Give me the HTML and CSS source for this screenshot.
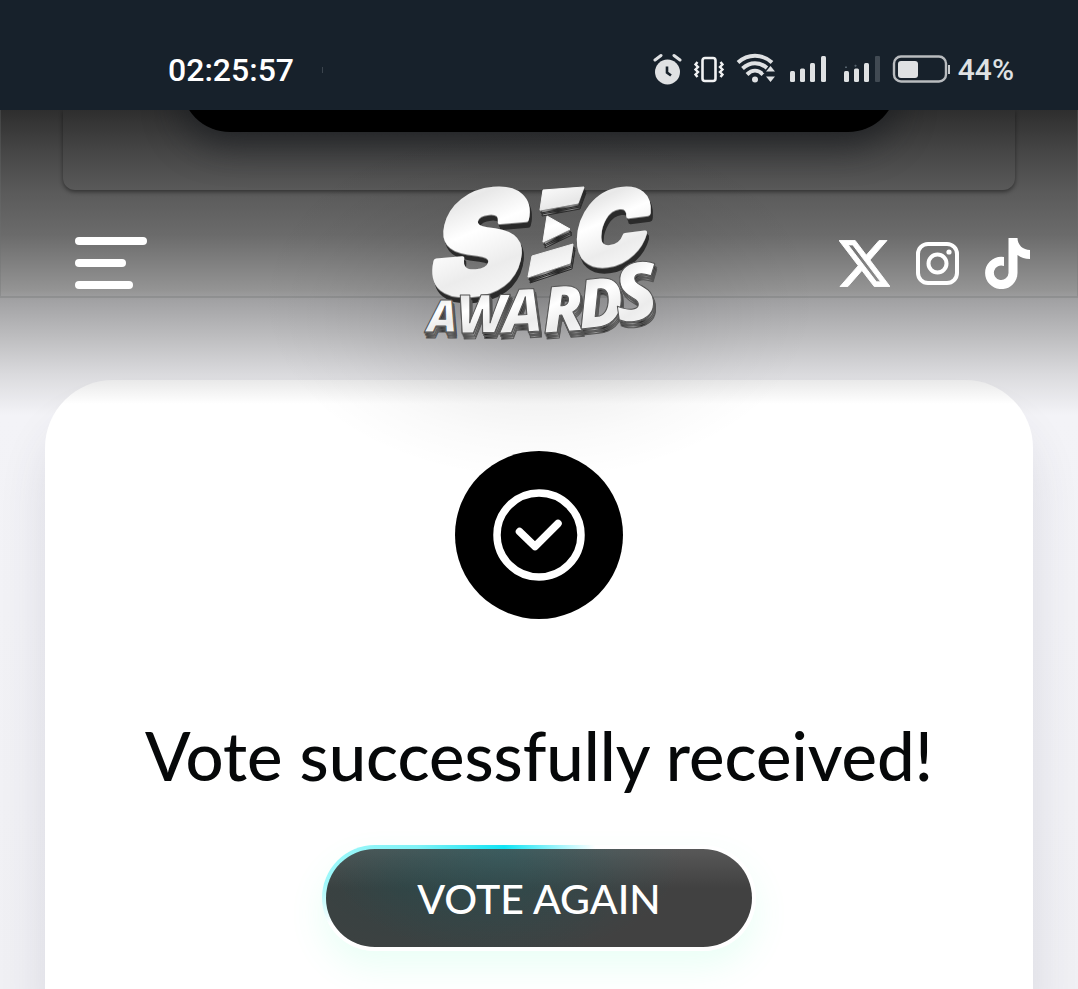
FILE: index.html
```html
<!DOCTYPE html>
<html lang="en">
<head>
<meta charset="utf-8">
<meta name="viewport" content="width=device-width, initial-scale=1">
<title>SEC Awards</title>
<link rel="stylesheet" href="styles.css">
</head>
<body>
<div class="status">
  <div class="status-left"><time>02:25:57</time><span class="tick"></span></div>
  <div class="status-right">
    <svg class="status-icons" width="297" height="34" viewBox="0 0 297 34" fill="#dfe1e3" aria-hidden="true">
      <circle cx="14.500" cy="19" r="12.500"/>
      <path d="M2 7L8 2.500M27 7L21 2.500" stroke="#dfe1e3" stroke-width="3" stroke-linecap="round"/>
      <path d="M14 13.500V19.500L18 22.500" fill="none" stroke="#17212b" stroke-width="2.600"/>
      <g fill="none" stroke="#f1f2f3">
        <rect x="49.500" y="5" width="13" height="23" rx="2.500" stroke-width="2.600"/>
        <path d="M44.500 9L42.500 11.500L45 14L42.500 16.500L45 19L42.500 21.500L44.500 24M67.500 9L69.500 11.500L67 14L69.500 16.500L67 19L69.500 21.500L67.500 24" stroke-width="2.400"/>
      </g>
      <g fill="none" stroke="#dfe1e3" stroke-width="4">
        <path d="M85 9.500C95 .500 109 .500 119 9.500"/>
        <path d="M89.500 15.500C97 8.500 107 8.500 114.500 15.500"/>
        <path d="M94 21.500C99 16.500 105 16.500 110 21.500"/>
      </g>
      <circle cx="102" cy="26.500" r="3"/>
      <path d="M113 18.500L117.500 13L122 18.500ZM113 23.500L117.500 29L122 23.500Z" stroke="#17212b" stroke-width="3" paint-order="stroke"/>
      <rect x="137" y="18" width="5" height="11" rx="1.500"/><rect x="147" y="15.500" width="5" height="13.500" rx="1.500"/><rect x="157" y="10" width="5" height="19" rx="1.500"/><rect x="168" y="3" width="5" height="26" rx="1.500"/>
      <rect x="191" y="18" width="5" height="11" rx="1.500"/><rect x="201" y="15.500" width="5" height="13.500" rx="1.500"/><rect x="211" y="10" width="5" height="19" rx="1.500"/><rect x="222" y="3" width="5" height="26" rx="1" fill="#414a53"/>
      <path d="M193 15V13.500M202 13.500L203 12" stroke="#53606b" stroke-width="2"/>
      <rect x="241" y="3.500" width="52" height="25" rx="7" fill="none" stroke="#b9bcbf" stroke-width="2.400"/>
      <rect x="245" y="8" width="20" height="17" rx="3"/>
      <path d="M296 12V21" stroke="#c7cacc" stroke-width="2"/>
    </svg>
    <span>44%</span>
  </div>
</div>
<div class="page">
  <div class="behind" aria-hidden="true"><div class="behind-card"><div class="behind-pill"></div></div></div>
  <header class="bar">
    <button class="menu" aria-label="Menu"><span class="line line-a"></span><span class="line line-b"></span><span class="line line-c"></span></button>
    <a class="logo" href="#" aria-label="SEC Awards">
      <svg width="232" height="156" viewBox="0 0 232 156">
        <defs>
          <linearGradient id="chrome" x1="0" y1="0" x2=".2" y2="1"><stop offset="0" stop-color="#fff"/><stop offset=".3" stop-color="#e8e8e8"/><stop offset=".5" stop-color="#fff"/><stop offset=".75" stop-color="#ececec"/><stop offset="1" stop-color="#fafafa"/></linearGradient>
          <linearGradient id="side"><stop offset="0" stop-color="#1c1c1c"/><stop offset=".3" stop-color="#a0a0a0"/><stop offset=".5" stop-color="#222"/><stop offset=".75" stop-color="#909090"/><stop offset="1" stop-color="#181818"/></linearGradient>
          <g id="word">
            <g class="big">
              <text class="s" transform="translate(6 112) rotate(-5) skewX(-9)">S</text>
              <text class="c" transform="translate(150 83) rotate(-7) skewX(-9)">C</text>
            </g>
            <path d="M119 5L160 2L154 18L116 25ZM123 31L146 44L119 57ZM108 71L149 59L146 78L104 92Z" stroke-width="1"/>
            <g class="small">
              <text class="w1" transform="translate(3 147)">A</text>
              <text class="w2" transform="translate(33 148) rotate(-1)">W</text>
              <text class="w3" transform="translate(79 148) rotate(-3)">A</text>
              <text class="w4" transform="translate(120 148) rotate(-4)">R</text>
              <text class="w5" transform="translate(156 144) rotate(-6)">D</text>
              <text class="w6" transform="translate(194 138) rotate(-8)">S</text>
            </g>
          </g>
        </defs>
        <g fill="url(#side)" stroke="#2b2b2b"><use href="#word" x="2" y="6"/><use href="#word" x="2" y="4"/><use href="#word" x="1" y="3"/></g>
        <use href="#word" y="1" fill="#888" stroke="#888"/>
        <use href="#word" fill="url(#chrome)" stroke="url(#chrome)"/>
      </svg>
    </a>
    <nav class="social" aria-label="Social">
      <a href="#" aria-label="X"><svg width="51" height="47" viewBox="1.254 2.250 21.573 19.500" fill="#fff" stroke="#fff" stroke-width=".4"><path d="M18.244 2.250h3.308l-7.227 8.260 8.502 11.240H16.170l-5.214-6.817L4.990 21.750H1.680l7.730-8.835L1.254 2.250H8.080l4.713 6.231zm-1.161 17.520h1.833L7.084 4.126H5.117z"/></svg></a>
      <a href="#" aria-label="Instagram"><svg width="43" height="43" viewBox="0 0 43 43" fill="none" stroke="#fff" stroke-width="4"><rect x="2" y="2" width="39" height="39" rx="10"/><circle cx="21.500" cy="21.500" r="9"/><circle cx="33" cy="10" r="2.600" fill="#fff" stroke="none"/></svg></a>
      <a href="#" aria-label="TikTok"><svg width="45" height="51" viewBox="0 0 45 51" fill="#fff"><path d="M23.500 0H32.500C32.500 7 38 12 45 12V21C40 21 36 19.500 32.500 17V35A16.200 16.200 0 1 1 16.300 18.700Q17.700 18.700 19 19V28A7.300 7.300 0 1 0 23.500 35Z"/></svg></a>
    </nav>
  </header>
  <main class="card">
    <svg class="badge" width="168" height="168" viewBox="0 0 168 168" fill="none" stroke="#fff" aria-hidden="true"><circle cx="84" cy="84" r="84" fill="#000" stroke="none"/><circle cx="84" cy="84" r="42" stroke-width="7.500"/><path d="M64.500 80.500L80 95.500L103 72.500" stroke-width="7.500" stroke-linecap="round" stroke-linejoin="round"/></svg>
    <h1>Vote successfully received!</h1>
    <button class="again">VOTE AGAIN</button>
  </main>
</div>
</body>
</html>
```
FILE: styles.css
```css
* { box-sizing: border-box; }
body {
  margin: 0;
  min-height: 100vh;
  display: flex;
  flex-direction: column;
  font-family: Lato, Roboto, sans-serif;
  background: #f2f2f6;
}
button { font: inherit; border: 0; padding: 0; cursor: pointer; }
.status {
  height: 110px;
  padding: 30px 64px 0 168px;
  display: flex;
  justify-content: space-between;
  align-items: center;
  background: #17212b;
  color: #fff;
  font: 500 32px/40px Roboto, sans-serif;
}
.status-left, .status-right { display: flex; align-items: center; }
.status-left { gap: 28px; }
.tick { width: 1px; height: 6px; background: #3b444d; }
.status-right { gap: 8px; color: #dfe1e3; font-size: 30px; }
.page {
  position: relative;
  flex: 1;
  display: flex;
  flex-direction: column;
  overflow: hidden;
  background: linear-gradient(#2e2e2e 0, #454545 40px, #5b5b5b 84px, #6b6b6b 125px, #949494 180px, #a1a1a3 190px, #bebec0 228px, #dadadd 264px, #f3f3f7 305px, #f0f0f4 100%);
}
.behind {
  position: absolute;
  inset: 0 0 auto;
  height: 188px;
  padding: 0 62px;
  border: 1px solid rgba(110, 112, 112, .3);
  border-width: 0 1px 2px;
}
.behind-card {
  height: 80px;
  overflow: hidden;
  border-radius: 0 0 12px 12px;
  box-shadow: 0 2px 4px rgba(0, 0, 0, .45);
}
.behind-pill {
  height: 98px;
  margin: -76px 118px 0;
  border-radius: 49px;
  background: #000;
  box-shadow: 0 12px 36px rgba(20, 23, 28, .65);
}
.bar {
  position: relative;
  z-index: 1;
  display: grid;
  grid-template-columns: 1fr auto 1fr;
  align-items: center;
  padding: 75px 48px 39px 75px;
}
.menu {
  display: flex;
  flex-direction: column;
  gap: 14px;
  justify-self: start;
  background: none;
}
.line { height: 8px; border-radius: 4px; background: #fff; }
.line-a { width: 72px; }
.line-b { width: 51px; }
.line-c { width: 58px; }
.logo, .social a, .logo svg, .social svg { display: block; }
.logo { margin-right: 26px; }
.logo svg { overflow: visible; font-family: "Open Sans", Lato, sans-serif; font-weight: 800; font-style: italic; }
.big { font-family: Inter, "Open Sans", sans-serif; font-weight: 900; stroke-width: 5px; stroke-linejoin: round; }
.small { stroke: #555; stroke-width: 1px; stroke-linejoin: round; }
.s { font-size: 138px; }
.c { font-size: 98px; }
.w1 { font-size: 45px; }
.w2 { font-size: 53px; }
.w3 { font-size: 60px; }
.w4 { font-size: 64px; }
.w5 { font-size: 68px; }
.w6 { font-size: 80px; }
.social { display: flex; align-items: center; justify-self: end; gap: 26px; }
.card {
  flex: 1;
  margin: 0 45px;
  padding: 71px 32px 38px;
  display: flex;
  flex-direction: column;
  align-items: center;
  border-radius: 68px 68px 0 0;
  background: linear-gradient(#e9e9e9, #fff 24px);
  box-shadow: 0 40px 48px rgba(60, 60, 90, .12);
}
.page::after {
  content: "";
  position: absolute;
  top: 0;
  left: 50%;
  width: 560px;
  height: 370px;
  margin-left: -280px;
  pointer-events: none;
  background: radial-gradient(closest-side, rgba(0, 0, 0, .16), rgba(0, 0, 0, .06) 50%, rgba(0, 0, 0, .02) 78%, transparent);
}
.badge { position: relative; z-index: 1; }
h1 {
  margin: 93px 0 46px;
  font-size: 67px;
  line-height: 87px;
  font-weight: 500;
  color: #060809;
  text-align: center;
}
.again {
  width: 434px;
  max-width: 100%;
  height: 106px;
  border: 4px solid transparent;
  border-radius: 53px;
  color: #fff;
  font-size: 41px;
  font-weight: 500;
  background:
    radial-gradient(ellipse 180px 110px at 42% 0, rgba(0, 110, 120, .25), transparent) padding-box,
    radial-gradient(ellipse 220px 120px at 18% 35%, rgba(0, 70, 70, .18), transparent) padding-box,
    linear-gradient(#585858, #414141 40%) padding-box,
    linear-gradient(rgba(255, 255, 255, 0) 35%, #fff 75%) border-box,
    linear-gradient(90deg, #9ff8fa, #7ff2f6 22%, #10e4f4 42%, #fff 63%) border-box;
  box-shadow: 0 16px 34px rgba(80, 255, 180, .12);
}
```
